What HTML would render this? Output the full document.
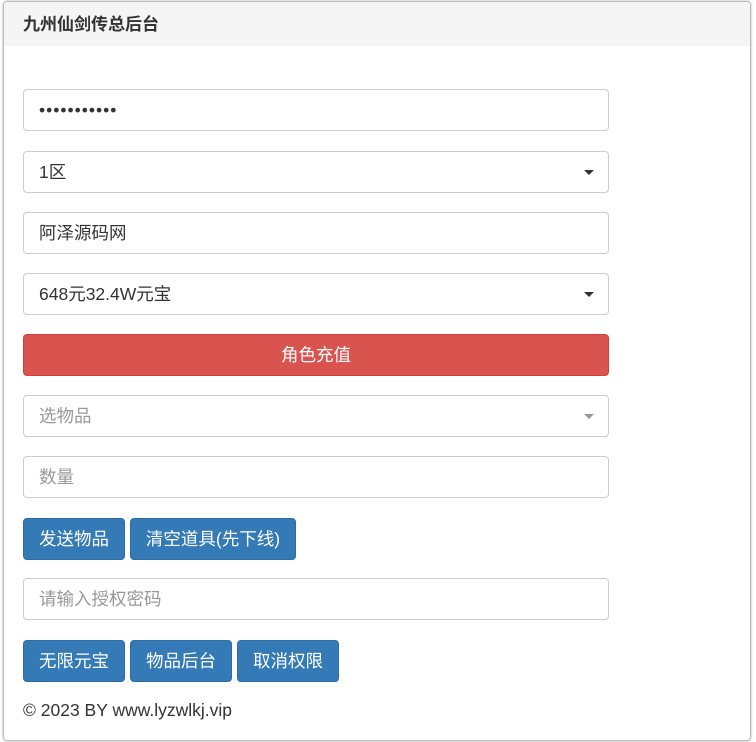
<!DOCTYPE html>
<html><head><meta charset="utf-8"><style>
body{margin:0;background:#fff;font-family:"Liberation Sans","Noto Sans CJK SC",sans-serif;}
.panel{position:absolute;left:3px;top:1px;width:746px;height:738px;border:1px solid #bbb;border-radius:4px;box-shadow:0 0 2px #aaa;overflow:hidden}
.hd{height:44px;background:#f5f5f5;font-weight:bold;font-size:17px;color:#333;line-height:46px;padding-left:19px}
.f{position:absolute;left:19px;width:586px;height:42px;border:1px solid #ccc;border-radius:4px;font-size:17.5px;line-height:40px;padding-left:15px;box-sizing:border-box;color:#333}
.f.ph{color:#999}
.caret{position:absolute;right:14px;top:18px;border-left:5px solid transparent;border-right:5px solid transparent;border-top:5px solid #333;width:0;height:0}
.red{background:#d9534f;border-color:#d43f3a;color:#fff;text-align:center;padding-left:0}
.b{position:absolute;height:42px;background:#337ab7;border:1px solid #2e6da4;border-radius:4px;color:#fff;font-size:17.5px;line-height:40px;text-align:center;box-sizing:border-box}
.ft{position:absolute;left:19px;top:698px;font-size:17.5px;color:#333}
</style></head><body>
<div class="panel">
<div class="hd">九州仙剑传总后台</div>
<div class="f" style="top:87px;letter-spacing:1px">•••••••••••</div>
<div class="f" style="top:149px">1区<span class="caret"></span></div>
<div class="f" style="top:210px">阿泽源码网</div>
<div class="f" style="top:271px">648元32.4W元宝<span class="caret"></span></div>
<div class="f red" style="top:332px">角色充值</div>
<div class="f ph" style="top:393px">选物品<span class="caret" style="border-top-color:#999"></span></div>
<div class="f ph" style="top:454px">数量</div>
<div class="b" style="left:19px;top:516px;width:102px">发送物品</div>
<div class="b" style="left:126px;top:516px;width:166px">清空道具(先下线)</div>
<div class="f ph" style="top:576px">请输入授权密码</div>
<div class="b" style="left:19px;top:638px;width:102px">无限元宝</div>
<div class="b" style="left:126px;top:638px;width:102px">物品后台</div>
<div class="b" style="left:233px;top:638px;width:102px">取消权限</div>
<div class="ft">© 2023 BY www.lyzwlkj.vip</div>
</div>
</body></html>
